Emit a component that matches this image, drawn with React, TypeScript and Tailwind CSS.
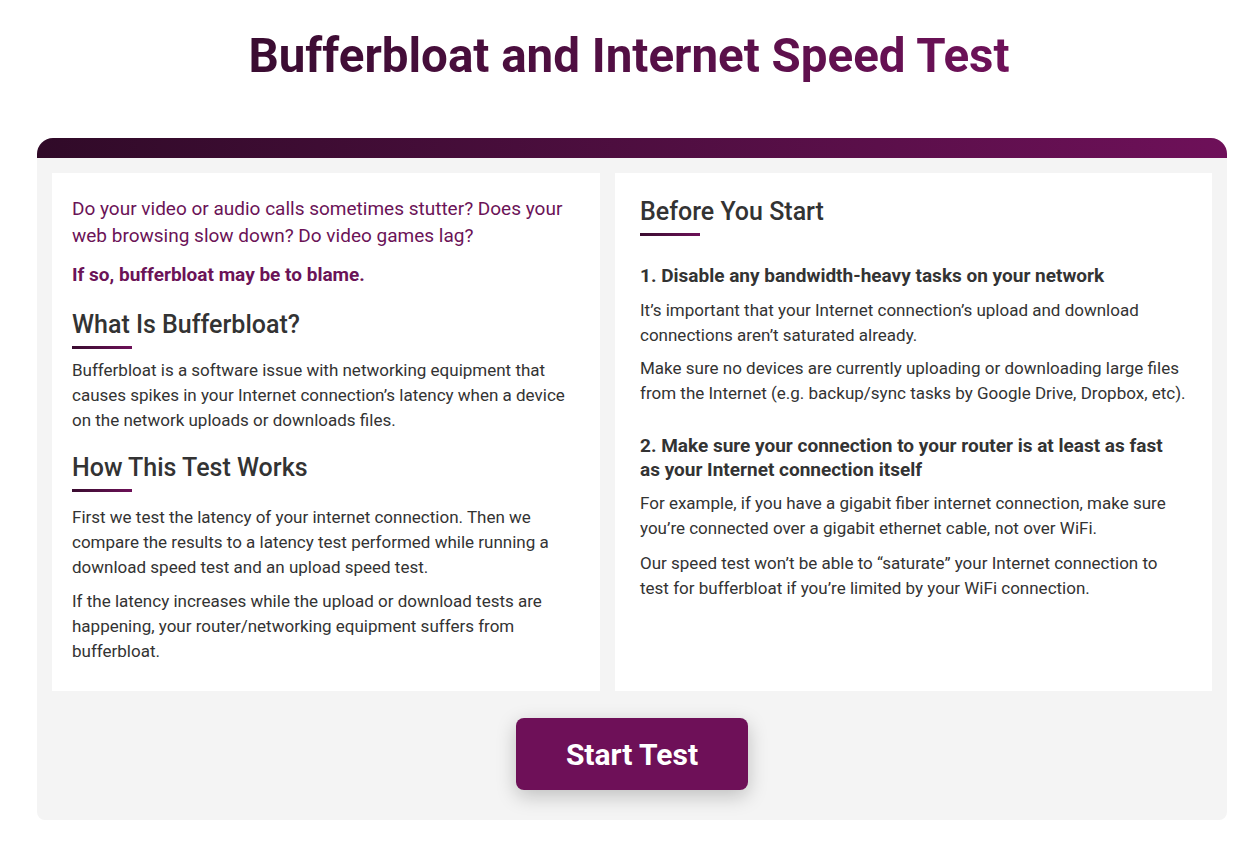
import { clsx } from "clsx";

const font = { fontFamily: "Roboto, 'Liberation Sans', sans-serif" };

function Heading(props: { children: React.ReactNode; className?: string }) {
  return (
    <div className={clsx("flex flex-col", props.className)}>
      <h2 className="text-[25px] leading-[30px] font-medium text-[#333]">{props.children}</h2>
      <div className="mt-[6px] h-[3px] w-[60px] bg-gradient-to-r from-[#3a0c30] to-[#6d1058]" />
    </div>
  );
}

function Para(props: { children: React.ReactNode }) {
  return <p className="text-[17px] leading-[25px] text-[#333]">{props.children}</p>;
}

export default function App() {
  return (
    <div className="min-h-[856px] bg-white" style={font}>
      <h1 className="pt-[26px] text-center text-[47.5px] leading-[60px] font-bold">
        <span className="bg-gradient-to-r from-[#3a0c31] to-[#6e1159] bg-clip-text text-transparent">
          Bufferbloat and Internet Speed Test
        </span>
      </h1>

      <div className="mx-[37px] mt-[52px] w-[1190px]">
        {/* header bar */}
        <div className="h-[20px] rounded-t-[16px] bg-gradient-to-r from-[#300a28] to-[#6e1059]" />
        <div className="flex flex-col rounded-b-[8px] bg-[#f4f4f4] px-[15px] pt-[15px] pb-[30px]">
          <div className="flex gap-[15px]">
            {/* left */}
            <div className="flex w-[548px] shrink-0 flex-col bg-white px-[20px] pt-[22px] pb-[27px]">
              <p className="text-[19px] leading-[27px] text-[#6b1357]">
                Do your video or audio calls sometimes stutter? Does your web browsing slow down? Do video games lag?
              </p>
              <p className="mt-[13px] text-[19px] leading-[26px] font-bold text-[#6b1357]">
                If so, bufferbloat may be to blame.
              </p>
              <Heading className="mt-[22px]">What Is Bufferbloat?</Heading>
              <div className="mt-[9px] flex flex-col gap-[8px]">
                <Para>
                  Bufferbloat is a software issue with networking equipment that causes spikes in your Internet
                  connection’s latency when a device on the network uploads or downloads files.
                </Para>
              </div>
              <Heading className="mt-[20px]">How This Test Works</Heading>
              <div className="mt-[13px] flex flex-col gap-[9px]">
                <Para>
                  First we test the latency of your internet connection. Then we compare the results to a latency
                  test performed while running a download speed test and an upload speed test.
                </Para>
                <Para>
                  If the latency increases while the upload or download tests are happening, your router/networking
                  equipment suffers from bufferbloat.
                </Para>
              </div>
            </div>

            {/* right */}
            <div className="flex min-w-0 flex-1 flex-col bg-white px-[25px] pt-[24px] pb-[28px]">
              <Heading>Before You Start</Heading>
              <h3 className="mt-[28px] text-[19px] leading-[24px] font-bold text-[#333]">
                1. Disable any bandwidth-heavy tasks on your network
              </h3>
              <div className="mt-[10px] flex flex-col gap-[8px]">
                <Para>
                  It’s important that your Internet connection’s upload and download connections aren’t saturated
                  already.
                </Para>
                <Para>
                  Make sure no devices are currently uploading or downloading large files from the Internet (e.g.
                  backup/sync tasks by Google Drive, Dropbox, etc).
                </Para>
              </div>
              <h3 className="mt-[28px] text-[19px] leading-[24px] font-bold text-[#333]">
                2. Make sure your connection to your router is at least as fast as your Internet connection itself
              </h3>
              <div className="mt-[9px] flex flex-col gap-[10px]">
                <Para>
                  For example, if you have a gigabit fiber internet connection, make sure you’re connected over a
                  gigabit ethernet cable, not over WiFi.
                </Para>
                <Para>
                  Our speed test won’t be able to “saturate” your Internet connection to test for bufferbloat if
                  you’re limited by your WiFi connection.
                </Para>
              </div>
            </div>
          </div>

          <div className="mt-[27px] flex justify-center">
            <button className="h-[72px] w-[232px] rounded-[8px] bg-[#6e1058] text-[30px] font-bold text-white shadow-[0_6px_20px_rgba(0,0,0,0.22)]">
              Start Test
            </button>
          </div>
        </div>
      </div>
    </div>
  );
}
